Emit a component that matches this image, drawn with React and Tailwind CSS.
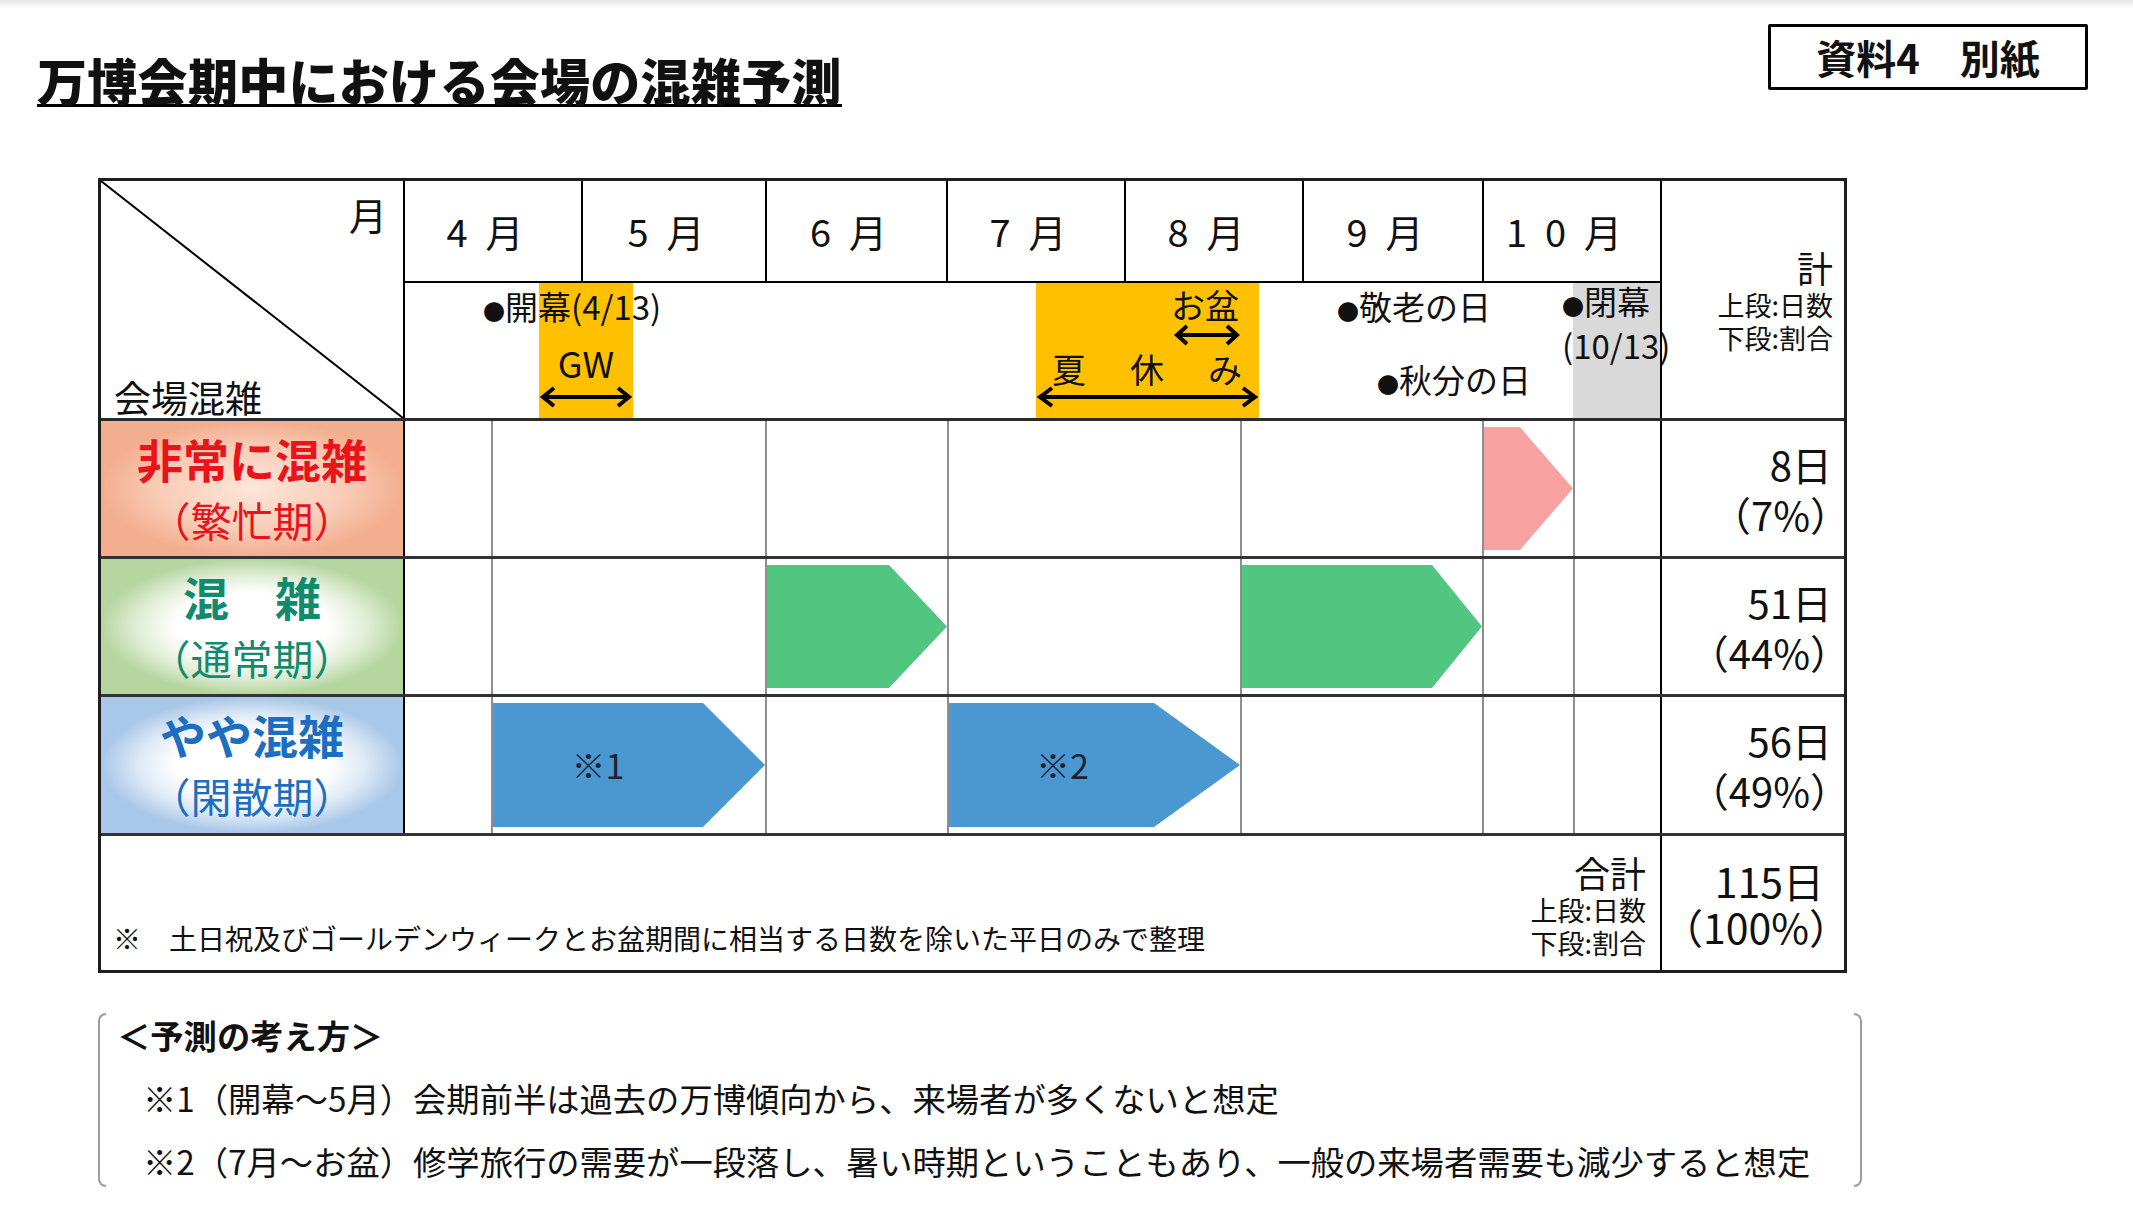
import React from 'react';

// 万博会期中の混雑予測（資料4 別紙）

function DoubleArrow({ width, head = 11 }) {
  return (
    <svg width={width} height="22" viewBox={`0 0 ${width} 22`} className="block">
      <line x1="4" y1="11" x2={width - 4} y2="11" stroke="#000" strokeWidth="4" />
      <polyline points={`${head + 4},2 4,11 ${head + 4},20`} fill="none" stroke="#000" strokeWidth="4" />
      <polyline points={`${width - head - 4},2 ${width - 4},11 ${width - head - 4},20`} fill="none" stroke="#000" strokeWidth="4" />
    </svg>
  );
}

function Dot() {
  return <span className="text-[22px]">●</span>;
}

function SumLabel({ head }) {
  return (
    <div className="flex flex-col items-end">
      <span className="text-[36px] leading-[42px]">{head}</span>
      <span className="text-[27px] leading-[33px]">上段:日数</span>
      <span className="text-[27px] leading-[33px]">下段:割合</span>
    </div>
  );
}

function LevelLabel({ title, sub, color, bg }) {
  return (
    <div className={`flex w-[304px] shrink-0 flex-col items-center justify-center border-r-2 border-black ${bg}`}>
      <span className={`text-[46px] font-bold leading-[61px] ${color}`}>{title}</span>
      <span className={`text-[41px] leading-[61px] ${color}`}>{sub}</span>
    </div>
  );
}

function Total({ days, pct, big }) {
  return (
    <div className={`flex flex-1 flex-col items-end justify-center ${big ? 'text-[41px] leading-[46px]' : 'text-[40px] leading-[50px]'}`}>
      <span className={big ? 'pr-[20px]' : 'pr-[12px]'}>{days}</span>
      <span className="mr-[-6px]">{pct}</span>
    </div>
  );
}

// 本体の細い縦罫（4/13, 5月, 6月, 7月, 8/13頃, 10月, 10/13）
function Timeline({ cells }) {
  return (
    <div className="grid w-[1257px] shrink-0 grid-cols-[86px_274px_182px_293px_242px_91px_87px] border-r-2 border-black">
      {cells.map((c, i) => (
        <div key={i} className={`py-[6px] ${i === 0 ? '' : 'border-l-2 border-[#8e8e8e]'}`}>
          {c}
        </div>
      ))}
    </div>
  );
}

const months = [['4'], ['5'], ['6'], ['7'], ['8'], ['9'], ['1', '0']];

export default function App() {
  return (
    <div className="relative h-[1220px] w-[2133px] overflow-hidden bg-white font-['Noto_Sans_CJK_JP','Noto_Sans',sans-serif] text-[#111]">
      <div className="h-[8px] bg-gradient-to-b from-[#e4e4e4] to-white" />

      {/* Title + badge */}
      <div className="flex h-[170px] items-start justify-between pl-[37px] pr-[45px]">
        <h1 className="mt-[46px] inline-block border-b-[3px] border-black text-[50px] font-black leading-none tracking-[0.3px]">
          万博会期中における会場の混雑予測
        </h1>
        <div className="mt-[16px] flex h-[66px] w-[320px] items-center justify-center rounded-[2px] border-[3px] border-black text-[40px] font-bold leading-none">
          資料4　別紙
        </div>
      </div>

      {/* Table */}
      <div className="ml-[98px] w-[1749px] border-[3px] border-[#1e1e1e]">
        {/* Header */}
        <div className="flex h-[240px] border-b-[3px] border-[#2b2b2b]">
          <div className="relative w-[304px] shrink-0 border-r-2 border-black">
            <svg className="absolute inset-0 h-full w-full" viewBox="0 0 100 100" preserveAspectRatio="none">
              <line x1="0" y1="0" x2="100" y2="100" stroke="#000" strokeWidth="2" vectorEffect="non-scaling-stroke" />
            </svg>
            <div className="relative flex h-full flex-col justify-between pb-[2px] pl-[13px] pr-[16px] pt-[14px]">
              <span className="self-end text-[38px] leading-none">月</span>
              <span className="text-[37px] leading-none">会場混雑</span>
            </div>
          </div>

          <div className="flex w-[1257px] shrink-0 flex-col border-r-2 border-black">
            <div className="grid h-[102px] grid-cols-[176px_184px_181px_178px_178px_180px_178px] border-b-2 border-black">
              {months.map((m, i) => (
                <div key={i} className={`flex items-center justify-center gap-[18px] pr-[16px] text-[38px] leading-none ${i === 0 ? '' : 'border-l-2 border-black'}`}>
                  {m.map((d, j) => (
                    <span key={j}>{d}</span>
                  ))}
                  <span>月</span>
                </div>
              ))}
            </div>
            <div className="relative flex-1 text-[33px] leading-none">
              <div className="absolute left-[134px] top-0 h-full w-[94px] bg-[#ffc000]" />
              <div className="absolute left-[631px] top-0 h-full w-[223px] bg-[#ffc000]" />
              <div className="absolute left-[1168px] top-0 h-full w-[87px] bg-[#d9d9d9]" />

              <span className="absolute left-[78px] top-[7px] whitespace-nowrap">
                <Dot />開幕(4/13)
              </span>
              <span className="absolute left-[134px] top-[61px] w-[94px] text-center text-[36px]">GW</span>
              <div className="absolute left-[134px] top-[103px]">
                <DoubleArrow width={94} />
              </div>

              <span className="absolute left-[766px] top-[5px] text-[34px]">お盆</span>
              <div className="absolute left-[768px] top-[41px]">
                <DoubleArrow width={68} head={10} />
              </div>
              <div className="absolute left-[647px] top-[69px] flex w-[190px] justify-between text-[34px]">
                <span>夏</span>
                <span>休</span>
                <span>み</span>
              </div>
              <div className="absolute left-[631px] top-[103px]">
                <DoubleArrow width={223} head={12} />
              </div>

              <span className="absolute left-[932px] top-[7px] whitespace-nowrap">
                <Dot />敬老の日
              </span>
              <span className="absolute left-[972px] top-[80px] whitespace-nowrap">
                <Dot />秋分の日
              </span>
              <div className="absolute left-[1157px] top-[-2px] z-10 flex flex-col leading-[40px]">
                <span>
                  <Dot />閉幕
                </span>
                <span>(10/13)</span>
              </div>
            </div>
          </div>

          <div className="flex flex-1 flex-col items-end justify-center pr-[11px]">
            <SumLabel head="計" />
          </div>
        </div>

        {/* 非常に混雑 */}
        <div className="flex h-[138px] border-b-[3px] border-[#333]">
          <LevelLabel
            title="非常に混雑"
            sub="（繁忙期）"
            color="text-[#e8141b]"
            bg="bg-[radial-gradient(ellipse_closest-side,#fde6d9_0%,#f9cdb8_60%,#f3ae8f_100%)]"
          />
          <Timeline
            cells={[
              null,
              null,
              null,
              null,
              null,
              <div className="h-full bg-[#f8a1a1] [clip-path:polygon(0_0,calc(100%_-_53px)_0,100%_50%,calc(100%_-_53px)_100%,0_100%)]" />,
              null,
            ]}
          />
          <Total days="8日" pct="（7%）" />
        </div>

        {/* 混雑 */}
        <div className="flex h-[138px] border-b-[3px] border-[#333]">
          <LevelLabel
            title="混　雑"
            sub="（通常期）"
            color="text-[#128a6d]"
            bg="bg-[radial-gradient(ellipse_closest-side,#ffffff_50%,#e1eed7_75%,#b6d6a1_100%)]"
          />
          <Timeline
            cells={[
              null,
              null,
              <div className="h-full bg-[#50c680] [clip-path:polygon(0_0,calc(100%_-_58px)_0,100%_50%,calc(100%_-_58px)_100%,0_100%)]" />,
              null,
              <div className="h-full bg-[#50c680] [clip-path:polygon(0_0,calc(100%_-_50px)_0,100%_50%,calc(100%_-_50px)_100%,0_100%)]" />,
              null,
              null,
            ]}
          />
          <Total days="51日" pct="（44%）" />
        </div>

        {/* やや混雑 */}
        <div className="flex h-[139px] border-b-[3px] border-[#333]">
          <LevelLabel
            title="やや混雑"
            sub="（閑散期）"
            color="text-[#1c6fc0]"
            bg="bg-[radial-gradient(ellipse_closest-side,#ffffff_50%,#dde9f6_75%,#a9c7e8_100%)]"
          />
          <Timeline
            cells={[
              null,
              <div className="flex h-full items-center justify-center bg-[#4b97d1] pr-[62px] text-[34px] leading-none text-[#1b2432] [clip-path:polygon(0_0,calc(100%_-_62px)_0,100%_50%,calc(100%_-_62px)_100%,0_100%)]">
                ※1
              </div>,
              null,
              <div className="flex h-full items-center justify-center bg-[#4b97d1] pr-[64px] text-[34px] leading-none text-[#1b2432] [clip-path:polygon(0_0,calc(100%_-_86px)_0,100%_50%,calc(100%_-_86px)_100%,0_100%)]">
                ※2
              </div>,
              null,
              null,
              null,
            ]}
          />
          <Total days="56日" pct="（49%）" />
        </div>

        {/* 合計 */}
        <div className="flex h-[134px]">
          <div className="flex w-[1561px] shrink-0 items-end justify-between border-r-2 border-black pb-[11px] pl-[12px] pr-[14px]">
            <span className="mb-[7px] text-[28px] leading-none">※　土日祝及びゴールデンウィークとお盆期間に相当する日数を除いた平日のみで整理</span>
            <SumLabel head="合計" />
          </div>
          <Total days="115日" pct="（100%）" big />
        </div>
      </div>

      {/* 予測の考え方 */}
      <div className="ml-[98px] mt-[40px] flex h-[174px] w-[1764px]">
        <div className="w-[8px] shrink-0 rounded-l-[10px] border-y-2 border-l-2 border-[#9c9c9c]" />
        <div className="flex flex-1 flex-col gap-[23px] pl-[11px] pt-[2px] text-[33.3px] leading-[40px]">
          <span className="font-bold">＜予測の考え方＞</span>
          <span className="pl-[26px]">※1（開幕～5月）会期前半は過去の万博傾向から、来場者が多くないと想定</span>
          <span className="pl-[26px]">※2（7月～お盆）修学旅行の需要が一段落し、暑い時期ということもあり、一般の来場者需要も減少すると想定</span>
        </div>
        <div className="w-[8px] shrink-0 rounded-r-[10px] border-y-2 border-r-2 border-[#9c9c9c]" />
      </div>
    </div>
  );
}
